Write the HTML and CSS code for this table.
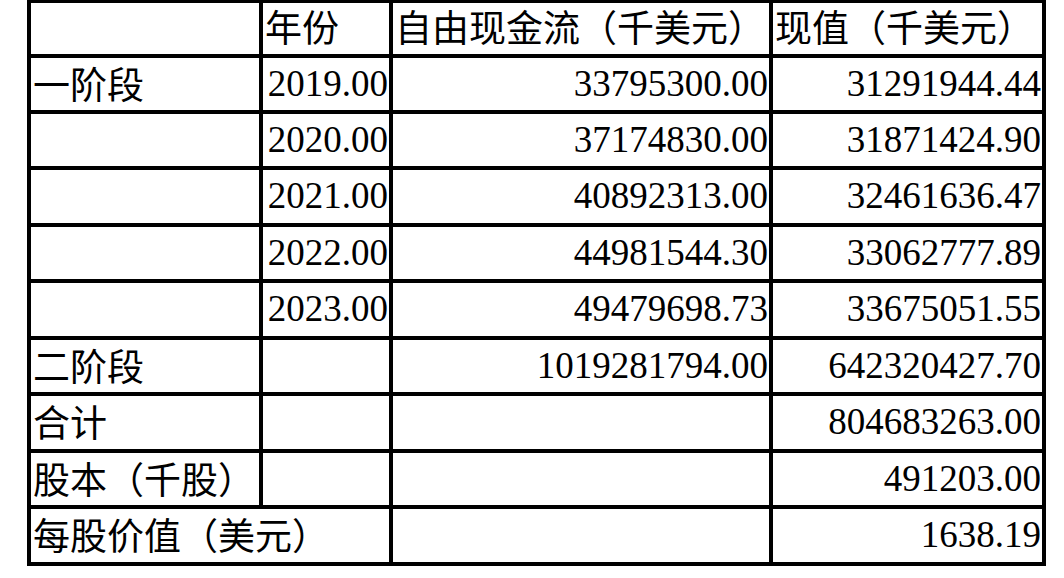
FILE: index.html
```html
<!DOCTYPE html>
<html lang="zh">
<head>
<meta charset="utf-8">
<title>估值表</title>
<link rel="stylesheet" href="styles.css">
</head>
<body>
<div class="sheet">
  <div class="cell head"></div>
  <div class="cell head">年份</div>
  <div class="cell head">自由现金流（千美元）</div>
  <div class="cell head">现值（千美元）</div>

  <div class="cell">一阶段</div>
  <div class="cell num">2019.00</div>
  <div class="cell num">33795300.00</div>
  <div class="cell num">31291944.44</div>

  <div class="cell"></div>
  <div class="cell num">2020.00</div>
  <div class="cell num">37174830.00</div>
  <div class="cell num">31871424.90</div>

  <div class="cell"></div>
  <div class="cell num">2021.00</div>
  <div class="cell num">40892313.00</div>
  <div class="cell num">32461636.47</div>

  <div class="cell"></div>
  <div class="cell num">2022.00</div>
  <div class="cell num">44981544.30</div>
  <div class="cell num">33062777.89</div>

  <div class="cell"></div>
  <div class="cell num">2023.00</div>
  <div class="cell num">49479698.73</div>
  <div class="cell num">33675051.55</div>

  <div class="cell">二阶段</div>
  <div class="cell"></div>
  <div class="cell num">1019281794.00</div>
  <div class="cell num">642320427.70</div>

  <div class="cell">合计</div>
  <div class="cell"></div>
  <div class="cell"></div>
  <div class="cell num">804683263.00</div>

  <div class="cell">股本（千股）</div>
  <div class="cell"></div>
  <div class="cell"></div>
  <div class="cell num">491203.00</div>

  <div class="cell span2">每股价值（美元）</div>
  <div class="cell"></div>
  <div class="cell num">1638.19</div>
</div>
</body>
</html>
```

FILE: styles.css
```css
html, body {
  margin: 0;
  padding: 0;
  background: #ffffff;
}

body {
  width: 1064px;
  height: 578px;
  overflow: hidden;
}

.sheet {
  display: grid;
  grid-template-columns: 228px 126px 376px 269px;
  grid-template-rows: 51px 51.5px repeat(8, 52.5px);
  gap: 4px;
  padding: 4px;
  background: #000000;
  width: max-content;
  margin: -1px 0 0 27px;
  font-family: "Noto Sans CJK SC", "Noto Sans", sans-serif;
  font-size: 37px;
  color: #000000;
}

.cell {
  background: #ffffff;
  line-height: 51px;
  padding: 0 1px 0 2px;
  white-space: nowrap;
}

.head {
  line-height: 46px;
}

.num {
  text-align: right;
  font-family: "Liberation Serif", "Tinos", "Times New Roman", "DejaVu Serif", serif;
}

.span2 {
  grid-column: span 2;
}
```
